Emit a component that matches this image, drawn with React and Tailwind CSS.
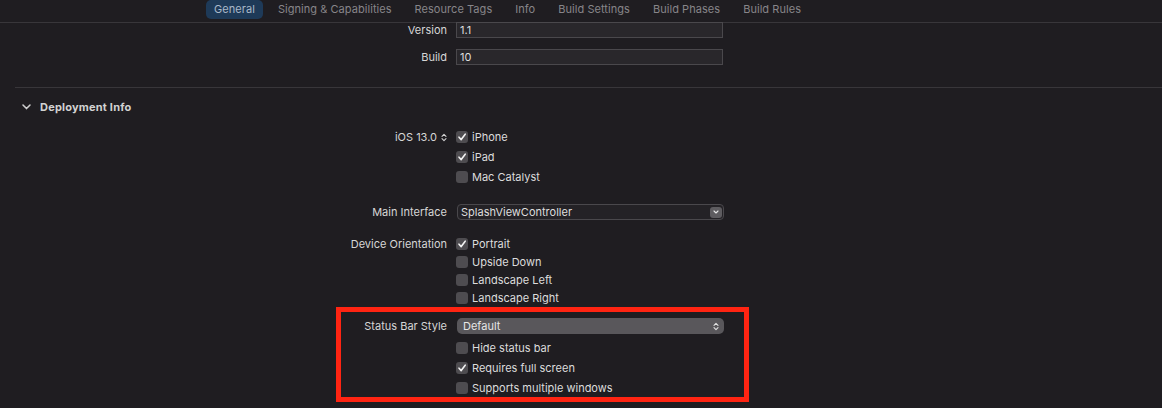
import React from 'react';

const tabs = ["General", "Signing & Capabilities", "Resource Tags", "Info", "Build Settings", "Build Phases", "Build Rules"];

const Check = ({ checked, label }) => (
  <div className="flex items-center gap-[4px]">
    <div className="w-3 h-3 rounded-[3px] bg-[#4e4c50] flex items-center justify-center">
      {checked && (
        <svg width="10" height="10" viewBox="0 0 10 10">
          <polyline points="2,5.2 4.2,7.6 8.2,2.2" fill="none" stroke="#f2f2f2" strokeWidth="1.6" strokeLinecap="round" strokeLinejoin="round" />
        </svg>
      )}
    </div>
    <span className="text-[#dcdcdc]">{label}</span>
  </div>
);

const UpDown = ({ color = "#d0d0d0" }) => (
  <svg width="6" height="9" viewBox="0 0 6 9">
    <polyline points="1,3.3 3,1.3 5,3.3" fill="none" stroke={color} strokeWidth="1.1" strokeLinecap="round" strokeLinejoin="round" />
    <polyline points="1,5.7 3,7.7 5,5.7" fill="none" stroke={color} strokeWidth="1.1" strokeLinecap="round" strokeLinejoin="round" />
  </svg>
);

const Row = ({ label, labelWidth = "w-[447px]", className = "", children }) => (
  <div className={`flex items-center ${className}`}>
    <div className={`${labelWidth} shrink-0 text-right text-[#d6d6d6]`}>{label}</div>
    <div className="ml-[9px] flex items-center">{children}</div>
  </div>
);

const TextField = ({ value }) => (
  <div className="w-[267px] h-[16px] bg-[#29272b] border border-[#4a484c] flex items-center pl-[3px] text-[#dedede]">
    {value}
  </div>
);

export default function App() {
  return (
    <div className="w-[1162px] h-[408px] overflow-hidden bg-[#1f1d21] text-[11px] leading-none" style={{ fontFamily: 'Inter, "Liberation Sans", sans-serif' }}>
      {/* tab bar */}
      <div className="h-[23px] border-b border-[#38363a] flex items-start pl-[206px] gap-[7px] tracking-[0.05px]">
        {tabs.map((t, i) => (
          <div
            key={t}
            className={`h-[19px] px-2 flex items-center rounded-[5px] ${i === 0 ? 'bg-[#1e3a58] text-[#a9b8c8]' : 'text-[#878589]'}`}
          >
            {t}
          </div>
        ))}
      </div>

      {/* identity rows */}
      <Row label="Version" className="h-[16px] -mt-[1px]">
        <TextField value="1.1" />
      </Row>
      <Row label="Build" className="h-[16px] mt-[11px]">
        <TextField value="10" />
      </Row>

      <div className="ml-[15px] mt-[22px] h-px bg-[#38363a]" />

      {/* section header */}
      <div className="h-[16px] mt-[11px] flex items-center pl-[22px] gap-[9px]">
        <svg width="9" height="6" viewBox="0 0 9 6">
          <polyline points="1,1 4.5,4.6 8,1" fill="none" stroke="#cfcfcf" strokeWidth="1.5" strokeLinecap="round" strokeLinejoin="round" />
        </svg>
        <span className="font-bold text-[#d2d2d2] tracking-[0.2px]">Deployment Info</span>
      </div>

      {/* deployment target */}
      <div className="mt-[12px]">
        <Row label={<span className="inline-flex items-center gap-[4px]">iOS 13.0 <UpDown /></span>} className="h-[20px]">
          <Check checked label="iPhone" />
        </Row>
        <Row label="" className="h-[20px]">
          <Check checked label="iPad" />
        </Row>
        <Row label="" className="h-[20px]">
          <Check label="Mac Catalyst" />
        </Row>
      </div>

      <Row label="Main Interface" className="h-[16px] mt-[17px]">
        <div className="ml-[1px] w-[267px] h-[16px] rounded-[4px] bg-[#242226] border border-[#4a484c] flex items-center justify-between pl-[3px] pr-[1px] text-[#dedede]">
          <span>SplashViewController</span>
          <div className="w-[12px] h-[11px] rounded-[3px] bg-[#5e5c60] flex items-center justify-center">
            <svg width="6" height="4" viewBox="0 0 6 4">
              <polyline points="1,1 3,3 5,1" fill="none" stroke="#e8e8e8" strokeWidth="1.1" strokeLinecap="round" strokeLinejoin="round" />
            </svg>
          </div>
        </div>
      </Row>

      <div className="mt-[15px]">
        <Row label="Device Orientation" className="h-[18px]">
          <Check checked label="Portrait" />
        </Row>
        <Row label="" className="h-[18px]">
          <Check label="Upside Down" />
        </Row>
        <Row label="" className="h-[18px]">
          <Check label="Landscape Left" />
        </Row>
        <Row label="" className="h-[18px]">
          <Check label="Landscape Right" />
        </Row>
      </div>

      {/* highlighted status bar group */}
      <div className="ml-[336px] w-[413px] h-[95px] border-[5px] border-[#ff2412] pt-[6px]">
        <Row label="Status Bar Style" labelWidth="w-[106px]" className="h-[16px]">
          <div className="ml-[1px] w-[267px] h-[16px] rounded-[5px] bg-[#59575b] flex items-center justify-between pl-[6px] pr-[5px] text-[#e6e6e6]">
            <span>Default</span>
            <UpDown color="#e0e0e0" />
          </div>
        </Row>
        <div className="mt-[4px]">
          <Row label="" labelWidth="w-[106px]" className="h-[20px]">
            <Check label="Hide status bar" />
          </Row>
          <Row label="" labelWidth="w-[106px]" className="h-[20px]">
            <Check checked label="Requires full screen" />
          </Row>
          <Row label="" labelWidth="w-[106px]" className="h-[20px]">
            <Check label="Supports multiple windows" />
          </Row>
        </div>
      </div>
    </div>
  );
}
